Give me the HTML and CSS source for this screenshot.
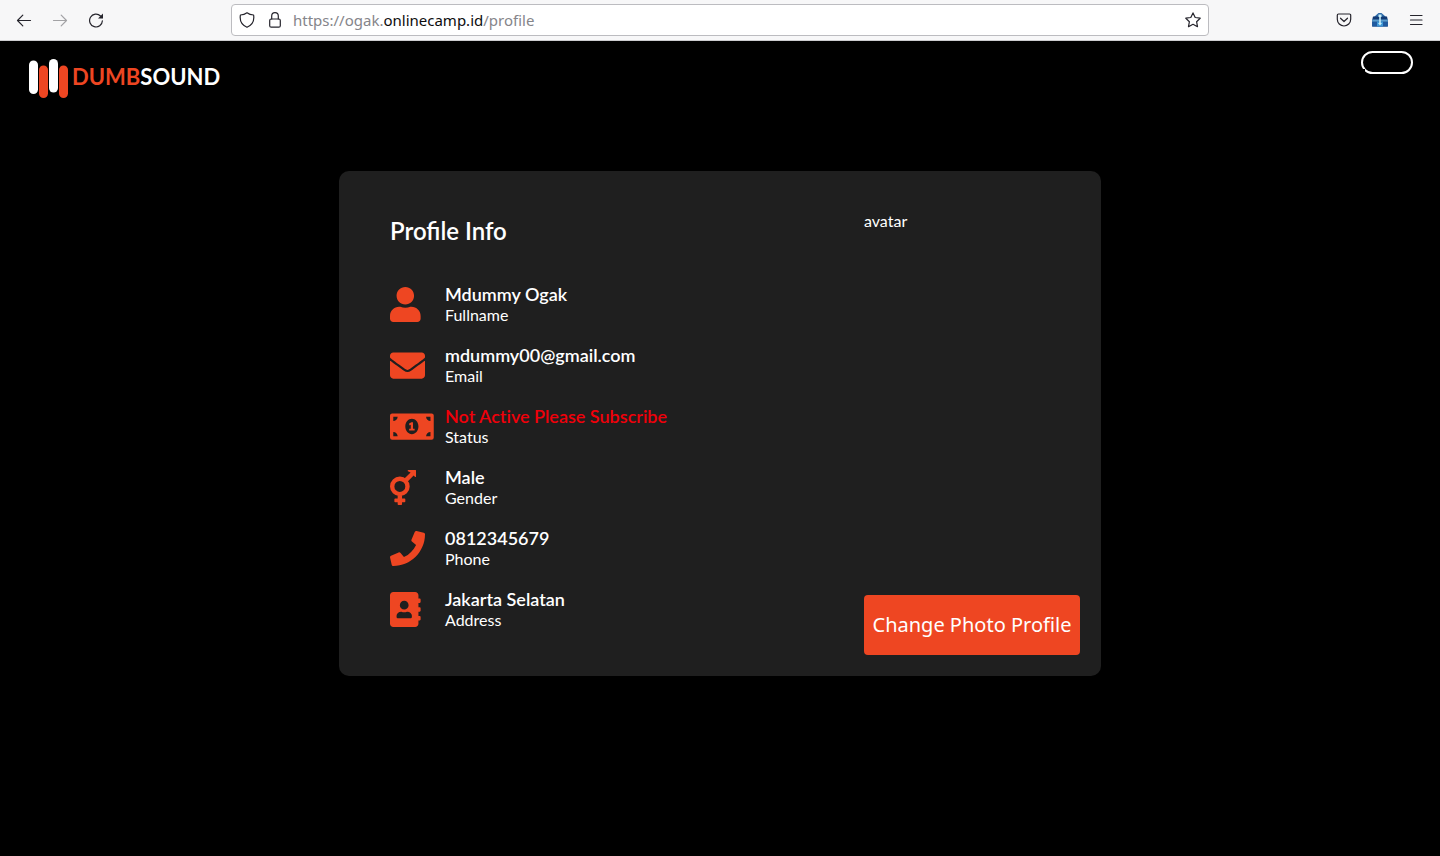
FILE: index.html
```html
<!DOCTYPE html>
<html lang="en">
<head>
<meta charset="utf-8">
<title>DumbSound Profile</title>
<link rel="stylesheet" href="styles.css">
</head>
<body>
<div class="toolbar">
  <div class="nav-buttons">
    <button class="tool" aria-label="Back"><svg viewBox="0 0 16 16" class="line"><path d="M14.500 8.500H1.500M6.800 3.200L1.500 8.500l5.300 5.300"/></svg></button>
    <button class="tool" aria-label="Forward" disabled><svg viewBox="0 0 16 16" class="line"><path d="M1.500 8.500h13M9.200 3.200l5.300 5.300-5.300 5.300"/></svg></button>
    <button class="tool" aria-label="Reload"><svg viewBox="0 0 16 16" class="line"><path d="M12.500 4A6.400 6.400 0 1 0 14.400 8.800"/><path class="solid" d="M15 1.500v5h-5z"/></svg></button>
  </div>
  <div class="address-bar">
    <svg viewBox="0 0 16 16" class="line"><path d="M8 .8c2 1.500 4.300 2.100 6.600 2.200.8 5-1.300 10-6.600 12.300C2.700 13 .6 8 1.400 3 3.700 2.900 6 2.300 8 .8z"/></svg>
    <svg viewBox="0 0 16 16" class="line"><rect x="2.700" y="7" width="10.600" height="8.200" rx="1.500"/><path d="M4.700 7V4a3.300 3.300 0 0 1 6.600 0v3"/></svg>
    <div class="url">https://ogak.<span class="domain">onlinecamp.id</span>/profile</div>
    <button class="star" aria-label="Bookmark"><svg viewBox="0 0 16 16" class="line"><path d="M8 .9l2.200 4.600 5 .7-3.600 3.500.9 5L8 12.300l-4.500 2.400.9-5L.8 6.200l5-.7z"/></svg></button>
  </div>
  <div class="tool-buttons">
    <button class="tool" aria-label="Pocket"><svg viewBox="0 0 16 16" class="line"><path d="M2.500 2h11a1.200 1.200 0 0 1 1.200 1.200v4.100a6.700 6.700 0 0 1-13.400 0V3.200A1.200 1.200 0 0 1 2.500 2zM4.500 6.200L8 9.500l3.500-3.300"/></svg></button>
    <button class="tool" aria-label="Extension"><svg viewBox="0 0 16 16"><path fill="#2d6aa8" d="M2 5l2.500-2.200L6.500 1h3l2 1.800L14 5z"/><path fill="#123a75" d="M1 4.500h14l.8 3.500v6.500H.2V8z"/><path fill="#5b9ccc" d="M.2 7.500h15.600v2.300H.2z"/><path fill="#1f5aa0" d="M.2 9.800h15.600v4.700H.2z"/><path fill="#3f97d6" d="M5 9.500h6v5H5z"/><path fill="#c8eef8" d="M6.500 2.500h3V5h-.7v7.500H7.200V5h-.7zM6 11h4l-2 2.500z"/></svg></button>
    <button class="tool" aria-label="Menu"><svg viewBox="0 0 16 16" class="line"><path d="M2.500 3.500h11.500M2.500 8h11.500M2.500 12.500h11.500"/></svg></button>
  </div>
</div>

<header class="site-header">
  <a class="logo" href="#">
    <svg viewBox="0 0 40 40" aria-hidden="true"><rect x="0" y="1.500" width="9" height="33.500" rx="4.500" fill="#fff"/><rect x="10" y="6.500" width="9" height="32.500" rx="4.500" fill="#ee4622"/><rect x="20" y="0" width="9" height="33.500" rx="4.500" fill="#fff"/><rect x="30" y="6.500" width="9" height="32.500" rx="4.500" fill="#ee4622"/></svg>
    <span class="logo-text"><span class="logo-accent">DUMB</span>SOUND</span>
  </a>
  <button class="account" aria-label="Account"></button>
</header>

<main class="profile">
  <section class="info">
    <h1>Profile Info</h1>
    <ul class="rows">
      <li><span class="icon"><svg viewBox="0 0 448 512"><path d="M224 256c70.700 0 128-57.300 128-128S294.700 0 224 0 96 57.300 96 128s57.300 128 128 128zm89.600 32h-16.700c-22.200 10.200-46.900 16-72.900 16s-50.600-5.800-72.900-16h-16.700C60.200 288 0 348.200 0 422.400V464c0 26.500 21.500 48 48 48h352c26.500 0 48-21.500 48-48v-41.600c0-74.200-60.200-134.400-134.400-134.400z"/></svg></span><div><h2>Mdummy Ogak</h2><p>Fullname</p></div></li>
      <li><span class="icon"><svg viewBox="0 0 512 512"><path d="M502.300 190.800c3.900-3.100 9.700-.2 9.700 4.700V400c0 26.500-21.500 48-48 48H48c-26.500 0-48-21.500-48-48V195.600c0-5 5.700-7.800 9.700-4.700 22.400 17.400 52.100 39.500 154.100 113.600 21.100 15.400 56.700 47.800 92.200 47.600 35.700.3 72-32.800 92.300-47.600 102-74.100 131.600-96.300 154-113.700zM256 320c23.200.4 56.600-29.200 73.400-41.400 132.700-96.300 142.800-104.700 173.400-128.700 5.800-4.500 9.200-11.500 9.200-18.900v-19c0-26.500-21.500-48-48-48H48c-26.500 0-48 21.500-48 48v19c0 7.400 3.400 14.300 9.200 18.900 30.600 23.900 40.700 32.400 173.400 128.700 16.800 12.200 50.200 41.800 73.400 41.400z"/></svg></span><div><h2>mdummy00@gmail.com</h2><p>Email</p></div></li>
      <li><span class="icon"><svg viewBox="0 0 640 512"><path fill-rule="evenodd" d="M32 64h576a32 32 0 0 1 32 32v320a32 32 0 0 1-32 32H32a32 32 0 0 1-32-32V96a32 32 0 0 1 32-32zM48 112v64c35 0 64-29 64-64zm544 0h-64c0 35 29 64 64 64zM48 400h64c0-35-29-64-64-64zm544 0v-64c-35 0-64 29-64 64zM320 144c-53 0-96 50-96 112s43 112 96 112 96-50 96-112-43-112-96-112zm-8 48h24v96h24v28h-80v-28h24v-56l-16 8-12-24z"/></svg></span><div><h2 class="inactive">Not Active Please Subscribe</h2><p>Status</p></div></li>
      <li><span class="icon"><svg viewBox="0 0 384 512"><circle cx="144" cy="240" r="112" fill="none" stroke="currentColor" stroke-width="64"/><path d="M112 368h64v48h36q12 0 12 12v32q0 12-12 12h-36v28q0 12-12 12h-40q-12 0-12-12v-28H76q-12 0-12-12v-32q0-12 12-12h36zM270 0h102q12 0 12 12v78c0 11-13 16-20 9l-18-18-101 101-45-45L301 36l-39-16c-8-7-3-20 8-20z"/></svg></span><div><h2>Male</h2><p>Gender</p></div></li>
      <li><span class="icon"><svg viewBox="0 0 512 512"><path d="M493.400 24.600l-104-24c-11.300-2.600-22.900 3.300-27.500 13.900l-48 112c-4.200 9.800-1.400 21.300 6.900 28l60.600 49.600c-36 76.700-98.900 140.500-177.200 177.200l-49.600-60.600c-6.800-8.300-18.200-11.100-28-6.900l-112 48C3.900 366.500-2 378.100.6 389.400l24 104C27.100 504.200 36.700 512 48 512c256.100 0 464-207.500 464-464 0-11.200-7.700-20.900-18.600-23.400z"/></svg></span><div><h2>0812345679</h2><p>Phone</p></div></li>
      <li><span class="icon"><svg viewBox="0 0 448 512"><path d="M436 160c6.600 0 12-5.400 12-12v-40c0-6.600-5.400-12-12-12h-20V48c0-26.500-21.500-48-48-48H48C21.500 0 0 21.500 0 48v416c0 26.500 21.500 48 48 48h320c26.500 0 48-21.500 48-48v-48h20c6.600 0 12-5.400 12-12v-40c0-6.600-5.400-12-12-12h-20v-64h20c6.600 0 12-5.400 12-12v-40c0-6.600-5.400-12-12-12h-20v-64h20zm-228-32c35.300 0 64 28.700 64 64s-28.700 64-64 64-64-28.700-64-64 28.700-64 64-64zm112 236.800c0 10.600-10 19.200-22.400 19.200H118.400C106 384 96 375.400 96 364.800v-19.200c0-31.800 30.100-57.600 67.200-57.600h5c12.300 5.100 25.700 8 39.800 8s27.600-2.900 39.800-8h5c37.100 0 67.200 25.800 67.200 57.600v19.200z"/></svg></span><div><h2>Jakarta Selatan</h2><p>Address</p></div></li>
    </ul>
  </section>
  <section class="photo">
    <div class="avatar">avatar</div>
    <button class="change">Change Photo Profile</button>
  </section>
</main>
</body>
</html>
```

FILE: styles.css
```css
* { box-sizing: border-box; }
body { margin: 0; background: #000; color: #fff; font-family: Lato, "Liberation Sans", sans-serif; }
button { font: inherit; color: inherit; padding: 0; border: 0; background: none; }
svg { display: block; }
h1, h2, p, ul { margin: 0; padding: 0; }

.toolbar { display: grid; grid-template-columns: 1fr minmax(0, 978px) 1fr; align-items: center; height: 41px; background: #f7f7f8; border-bottom: 1px solid #cccccf; }
.toolbar svg { width: 16px; height: 16px; }
.line { fill: none; stroke: #25242c; stroke-width: 1.2; stroke-linecap: round; stroke-linejoin: round; }
.line .solid { fill: #25242c; stroke: none; }
.nav-buttons, .tool-buttons { display: flex; gap: 20px; padding: 0 16px; }
.tool-buttons { justify-content: flex-end; }
.tool:disabled { opacity: .4; }
.address-bar { display: flex; align-items: center; gap: 12px; height: 32px; padding: 0 7px; background: #fff; border: 1px solid #bcbcc0; border-radius: 4px; }
.url { flex: 1; margin-left: -2px; font: 15px/20px "Noto Sans", "Open Sans", sans-serif; color: #85858a; }
.domain { color: #0c0c0d; }

.site-header { display: flex; justify-content: space-between; align-items: flex-start; padding: 10px 27px 0 29px; }
.logo { display: flex; gap: 3px; padding-top: 8px; color: #fff; text-decoration: none; }
.logo svg { width: 40px; height: 40px; }
.logo-text { font-size: 22px; line-height: 36px; font-weight: 700; }
.logo-accent { color: #ee4622; }
.account { position: relative; width: 52px; height: 23px; border: 2px solid #fff; border-radius: 12px; }
.account::after { content: ""; position: absolute; left: 0; bottom: 0; width: 2px; height: 3px; background: #000; }

.profile { display: flex; justify-content: space-between; width: calc(100% - 40px); max-width: 762px; margin: 72px auto 0; padding: 40px 21px 21px 51px; background: #1f1f1f; border-radius: 10px; font-variant-ligatures: no-common-ligatures; }
.info h1 { font-size: 24px; line-height: 40px; font-weight: 600; font-variant-ligatures: normal; }
.rows { display: grid; gap: 19px; margin-top: 32px; padding-bottom: 25px; list-style: none; }
.rows li { display: grid; grid-template-columns: 55px auto; align-items: start; }
.icon { display: flex; padding-top: 4px; color: #ee4622; }
.icon svg { height: 35px; fill: currentColor; }
.rows h2 { font-size: 18px; line-height: 22px; font-weight: 600; }
.rows .inactive { color: #f0000a; }
.rows p { font-size: 16px; line-height: 20px; }
.photo { display: flex; flex-direction: column; justify-content: space-between; width: 216px; }
.avatar { font-size: 16px; line-height: 20px; }
.change { height: 60px; border-radius: 4px; background: #ee4622; font: 20px/30px "Noto Sans", "Open Sans", sans-serif; white-space: nowrap; }
```
